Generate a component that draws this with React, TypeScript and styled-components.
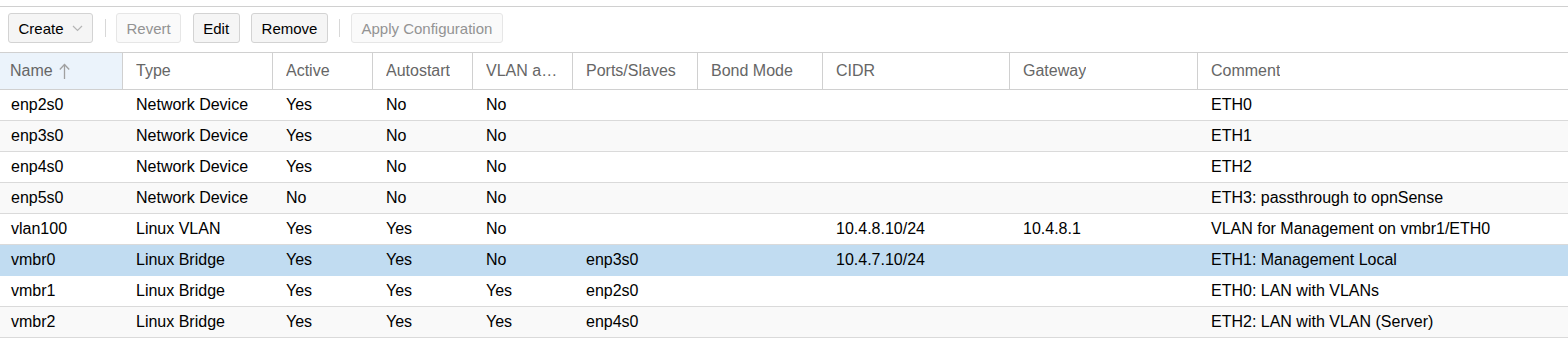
import styled, { createGlobalStyle } from "styled-components"

const GlobalStyle = createGlobalStyle`
  html, body {
    margin: 0;
    padding: 0;
    background: #fff;
    font-family: "Liberation Sans", Arial, sans-serif;
  }
`

const COLS = "123px 150px 100px 100px 100px 125px 125px 187px 188px 1fr"

const Panel = styled.div`
  margin-top: 6px;
  border-top: 1px solid #d0d0d0;
  width: 1568px;
`

const Toolbar = styled.div`
  display: flex;
  align-items: center;
  height: 45px;
  padding: 0 8px 3px;
  box-sizing: border-box;
`

const Button = styled.button<{ disabled?: boolean }>`
  display: flex;
  align-items: center;
  gap: 8px;
  height: 30px;
  padding: 0 9.5px;
  margin-right: 11.5px;
  border: 1px solid ${props => (props.disabled ? "#e6e6e6" : "#d3d3d3")};
  border-radius: 3px;
  background: ${props => (props.disabled ? "#fafafa" : "#f5f5f5")};
  color: ${props => (props.disabled ? "#939393" : "#000")};
  font-family: "Liberation Sans", Arial, sans-serif;
  font-size: 15px;
  cursor: default;
`

const Separator = styled.div`
  width: 1px;
  height: 18px;
  background: #d8d8d8;
  margin: 0 10.5px 0 0;
`

const HeaderRow = styled.div`
  display: grid;
  grid-template-columns: ${COLS};
  height: 38px;
  box-sizing: border-box;
  border-top: 1px solid #d0d0d0;
  border-bottom: 1px solid #d0d0d0;
`

const HeaderCell = styled.div<{ sorted?: boolean; last?: boolean }>`
  display: flex;
  align-items: center;
  gap: 6px;
  padding: 0 13px;
  box-sizing: border-box;
  min-width: 0;
  border-right: ${props => (props.last ? "none" : "1px solid #d0d0d0")};
  background: ${props => (props.sorted ? "#ebf3fb" : "#fff")};
  color: #666;
  font-size: 16px;

  &:first-child {
    padding-left: 10px;
  }
`

const HeaderText = styled.span`
  white-space: nowrap;
  overflow: hidden;
  text-overflow: ellipsis;
`

const Row = styled.div<{ alt?: boolean; selected?: boolean }>`
  display: grid;
  grid-template-columns: ${COLS};
  height: 31px;
  box-sizing: border-box;
  border-bottom: 1px solid ${props => (props.selected ? "#c1dcf1" : "#dadada")};
  background: ${props => (props.selected ? "#c1dcf1" : props.alt ? "#f9f9f9" : "#fff")};
`

const Cell = styled.div`
  display: flex;
  align-items: center;
  padding: 0 13px;
  min-width: 0;
  white-space: nowrap;
  overflow: hidden;
  color: #000;
  font-size: 16px;

  &:first-child {
    padding-left: 11px;
  }
`

const headers = [
  "Name",
  "Type",
  "Active",
  "Autostart",
  "VLAN aware",
  "Ports/Slaves",
  "Bond Mode",
  "CIDR",
  "Gateway",
  "Comment",
]

const rows = [
  ["enp2s0", "Network Device", "Yes", "No", "No", "", "", "", "", "ETH0"],
  ["enp3s0", "Network Device", "Yes", "No", "No", "", "", "", "", "ETH1"],
  ["enp4s0", "Network Device", "Yes", "No", "No", "", "", "", "", "ETH2"],
  ["enp5s0", "Network Device", "No", "No", "No", "", "", "", "", "ETH3: passthrough to opnSense"],
  ["vlan100", "Linux VLAN", "Yes", "Yes", "No", "", "", "10.4.8.10/24", "10.4.8.1", "VLAN for Management on vmbr1/ETH0"],
  ["vmbr0", "Linux Bridge", "Yes", "Yes", "No", "enp3s0", "", "10.4.7.10/24", "", "ETH1: Management Local"],
  ["vmbr1", "Linux Bridge", "Yes", "Yes", "Yes", "enp2s0", "", "", "", "ETH0: LAN with VLANs"],
  ["vmbr2", "Linux Bridge", "Yes", "Yes", "Yes", "enp4s0", "", "", "", "ETH2: LAN with VLAN (Server)"],
]

const Chevron = () => (
  <svg width="11" height="7" viewBox="0 0 11 7">
    <polyline points="1,1 5.5,5.5 10,1" fill="none" stroke="#b5b5b5" strokeWidth="1.2" />
  </svg>
)

const SortUp = () => (
  <svg width="11" height="16" viewBox="0 0 11 16">
    <line x1="5.5" y1="1.5" x2="5.5" y2="16" stroke="#a0a0a0" strokeWidth="1.3" />
    <polyline points="0.8,6.5 5.5,1.5 10.2,6.5" fill="none" stroke="#a0a0a0" strokeWidth="1.3" />
  </svg>
)

function App() {
  return (
    <>
      <GlobalStyle />
      <Panel>
        <Toolbar>
          <Button>
            Create <Chevron />
          </Button>
          <Separator />
          <Button disabled>Revert</Button>
          <Button>Edit</Button>
          <Button>Remove</Button>
          <Separator />
          <Button disabled>Apply Configuration</Button>
        </Toolbar>
        <HeaderRow>
          {headers.map((h, i) => (
            <HeaderCell key={h} sorted={i === 0} last={i === headers.length - 1}>
              <HeaderText>{h}</HeaderText>
              {i === 0 && <SortUp />}
            </HeaderCell>
          ))}
        </HeaderRow>
        {rows.map((r, i) => (
          <Row key={r[0]} alt={i % 2 === 1} selected={r[0] === "vmbr0"}>
            {r.map((c, j) => (
              <Cell key={j}>{c}</Cell>
            ))}
          </Row>
        ))}
      </Panel>
    </>
  )
}

export default App
